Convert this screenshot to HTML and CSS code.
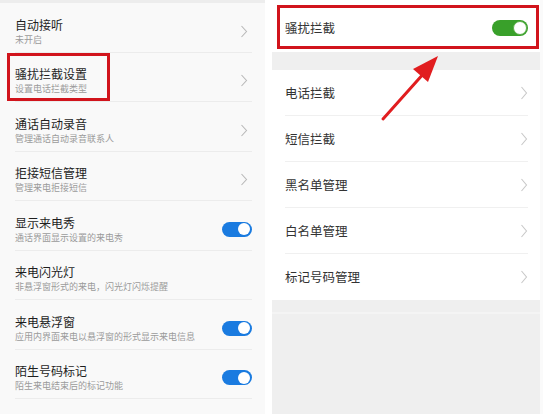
FILE: index.html
```html
<!DOCTYPE html>
<html lang="zh">
<head>
<meta charset="utf-8">
<link rel="stylesheet" href="styles.css">
</head>
<body>
<div class="page">
  <div class="left">
    <div class="topbar"></div>
    <div class="row"><div class="text"><div class="t">自动接听</div><div class="s">未开启</div></div><svg class="chev" width="8" height="13" viewBox="0 0 8 13"><polyline points="1.5,1 6.5,6.5 1.5,12" /></svg></div>
    <div class="row"><div class="text"><div class="t">骚扰拦截设置</div><div class="s">设置电话拦截类型</div></div><svg class="chev" width="8" height="13" viewBox="0 0 8 13"><polyline points="1.5,1 6.5,6.5 1.5,12" /></svg></div>
    <div class="row"><div class="text"><div class="t">通话自动录音</div><div class="s">管理通话自动录音联系人</div></div><svg class="chev" width="8" height="13" viewBox="0 0 8 13"><polyline points="1.5,1 6.5,6.5 1.5,12" /></svg></div>
    <div class="row"><div class="text"><div class="t">拒接短信管理</div><div class="s">管理来电拒接短信</div></div><svg class="chev" width="8" height="13" viewBox="0 0 8 13"><polyline points="1.5,1 6.5,6.5 1.5,12" /></svg></div>
    <div class="row"><div class="text"><div class="t">显示来电秀</div><div class="s">通话界面显示设置的来电秀</div></div><div class="tog blue"><span class="knob"></span></div></div>
    <div class="row"><div class="text"><div class="t">来电闪光灯</div><div class="s">非悬浮窗形式的来电，闪光灯闪烁提醒</div></div></div>
    <div class="row"><div class="text"><div class="t">来电悬浮窗</div><div class="s">应用内界面来电以悬浮窗的形式显示来电信息</div></div><div class="tog blue"><span class="knob"></span></div></div>
    <div class="row"><div class="text"><div class="t">陌生号码标记</div><div class="s">陌生来电结束后的标记功能</div></div><div class="tog blue"><span class="knob"></span></div></div>
  </div>
  <div class="gap"></div>
  <div class="right">
    <div class="head">
      <div class="rtext">骚扰拦截</div>
      <div class="tog green"><span class="knob"></span></div>
    </div>
    <div class="band"></div>
    <div class="list">
      <div class="rrow"><div class="rtext">电话拦截</div><svg class="rchev" width="8" height="14" viewBox="0 0 8 14"><polyline points="1.5,1 6.5,7 1.5,13" /></svg></div>
      <div class="rrow"><div class="rtext">短信拦截</div><svg class="rchev" width="8" height="14" viewBox="0 0 8 14"><polyline points="1.5,1 6.5,7 1.5,13" /></svg></div>
      <div class="rrow"><div class="rtext">黑名单管理</div><svg class="rchev" width="8" height="14" viewBox="0 0 8 14"><polyline points="1.5,1 6.5,7 1.5,13" /></svg></div>
      <div class="rrow"><div class="rtext">白名单管理</div><svg class="rchev" width="8" height="14" viewBox="0 0 8 14"><polyline points="1.5,1 6.5,7 1.5,13" /></svg></div>
      <div class="rrow last"><div class="rtext">标记号码管理</div><svg class="rchev" width="8" height="14" viewBox="0 0 8 14"><polyline points="1.5,1 6.5,7 1.5,13" /></svg></div>
    </div>
    <div class="bottom"><div class="bline"></div></div>
  </div>
  <div class="edge"></div>

  <div class="mark mark-left"></div>
  <div class="mark mark-right"></div>
  <svg class="arrow" width="543" height="414" viewBox="0 0 543 414">
    <line x1="383" y1="119" x2="425" y2="72" />
    <polygon points="438,56 413,69 428,82" />
  </svg>
</div>
</body>
</html>
```
FILE: styles.css
```css
* { box-sizing: border-box; }
html, body { margin: 0; padding: 0; background: #fff; }
body {
  font-family: "Noto Sans CJK SC", "Noto Sans", sans-serif;
  width: 543px;
  height: 414px;
  overflow: hidden;
}
.page {
  position: relative;
  display: flex;
  width: 543px;
  height: 414px;
}
.left {
  width: 265px;
  height: 414px;
  background: #f9f9f9;
  display: flex;
  flex-direction: column;
}
.topbar {
  height: 3px;
  background: #ededed;
  flex: none;
}
.row {
  flex: none;
  height: 49.5px;
  margin: 0 13px 0 15px;
  padding-top: 8px;
  border-bottom: 1px solid #ececec;
  display: flex;
  align-items: center;
  justify-content: space-between;
}
.text { display: flex; flex-direction: column; gap: 2px; }
.t {
  font-size: 12px;
  line-height: 15px;
  color: #1e1e1e;
}
.s {
  font-size: 9px;
  line-height: 12px;
  color: #9b9b9b;
  white-space: nowrap;
}
.chev {
  margin-right: 4px;
  fill: none;
  stroke: #b8b8b8;
  stroke-width: 1.1;
}
.tog {
  position: relative;
  flex: none;
  border-radius: 9px;
}
.tog.blue {
  width: 30px;
  height: 15px;
  background: #1a7be0;
}
.tog.blue .knob {
  position: absolute;
  right: 2px;
  top: 1.5px;
  width: 12px;
  height: 12px;
  border-radius: 50%;
  background: #fff;
}
.gap { width: 7px; background: #fff; }
.right {
  width: 268px;
  height: 414px;
  display: flex;
  flex-direction: column;
  background: #fff;
}
.head {
  height: 52px;
  display: flex;
  align-items: center;
  justify-content: space-between;
  padding: 10px 12px 6px 13px;
}
.rtext {
  font-size: 12.5px;
  line-height: 16px;
  color: #333;
}
.tog.green {
  width: 36px;
  height: 16px;
  background: #39a02a;
}
.tog.green .knob {
  position: absolute;
  right: 1px;
  top: 1px;
  width: 14px;
  height: 14px;
  border-radius: 50%;
  background: #fff;
  border: 1px solid #5cae4a;
}
.band {
  height: 18px;
  background: #efefef;
}
.list { display: flex; flex-direction: column; }
.rrow {
  height: 46px;
  margin: 0 12px 0 13px;
  border-bottom: 1px solid #f0f0f0;
  display: flex;
  align-items: center;
  justify-content: space-between;
}
.rrow.last { border-bottom: none; }
.rchev {
  fill: none;
  stroke: #c8c8c8;
  stroke-width: 1.1;
}
.bottom {
  flex: 1;
  background: #efefef;
  padding-top: 12px;
}
.bline {
  height: 2px;
  background: #f4f4f4;
}
.edge { width: 3px; background: #fafafa; }

.mark {
  position: absolute;
  border: 3px solid #d1141c;
}
.mark-left {
  left: 7px;
  top: 53px;
  width: 103px;
  height: 48px;
}
.mark-right {
  left: 277px;
  top: 5px;
  width: 262px;
  height: 44px;
}
.arrow {
  position: absolute;
  left: 0;
  top: 0;
}
.arrow line {
  stroke: #e11d1f;
  stroke-width: 3;
  stroke-linecap: round;
}
.arrow polygon { fill: #e11d1f; }
```
